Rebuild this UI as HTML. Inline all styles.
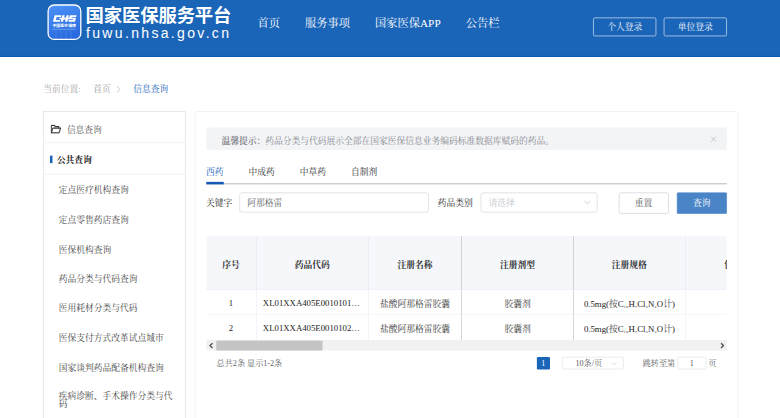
<!DOCTYPE html>
<html lang="zh-CN">
<head>
<meta charset="utf-8">
<title>国家医保服务平台</title>
<style>
*{box-sizing:border-box;margin:0;padding:0}
html,body{width:780px;height:418px;overflow:hidden;background:#fff}
body{font-family:"Liberation Serif","Noto Serif CJK SC",serif;position:relative}
#wrap{position:absolute;left:0;top:0;width:1248px;height:670px;transform:scale(.625);transform-origin:0 0;font-size:14px;color:#606266;background:#fff;overflow:hidden}
#hd{position:absolute;left:0;top:0;width:1248px;height:91.3px;background:#1b65b9;box-shadow:inset 0 -2px 0 #1259b6}
#nav{position:absolute;left:392px;top:0;height:75px;line-height:75px;font-size:18px;color:#fff;white-space:nowrap}
#nav>span{display:inline-block;padding:0 20px}
.lg{position:absolute;top:28px;height:30.4px;width:101.5px;border:1px solid rgba(255,255,255,.9);border-radius:3px;color:#fff;font-size:14px;line-height:30.8px;text-align:center}
#logo{position:absolute;left:0;top:0}
#bc{position:absolute;left:69.3px;top:133.2px;line-height:20px;font-size:14px;white-space:nowrap;color:#aaa}
#bc .a{color:#999;margin-left:20px}
#bc .s{display:inline-block;width:7px;height:12px;margin:0 20px 0 9px;vertical-align:-1.5px}
#bc .c{color:#1b65b9}
#sb{position:absolute;left:69px;top:178.46px;width:228px;height:520px;border:1px solid #dcdcdc;background:#fff}
#sb .t{height:49.74px;border-bottom:1px solid #ebebeb;line-height:57.6px;padding-left:37px;color:#555;position:relative;margin-top:0}
#sb .t .ic{position:absolute;left:10.5px;top:19.3px}
#sb .g{height:50.3px;border-bottom:1px solid #ebebeb;line-height:56.5px;padding-left:21px;color:#222;font-weight:bold;position:relative}
#sb .g:before{content:"";position:absolute;left:10px;top:20px;width:4.4px;height:11.6px;background:#1b65b9}
#sb ul{list-style:none;padding-top:.7px}
#sb li{height:47.3px;line-height:50.6px;padding-left:24px;color:#484848;white-space:nowrap}
#sb li.w{line-height:12.4px;padding-top:17.6px;height:auto}
#mn{position:absolute;left:312px;top:178.46px;width:868.8px;height:520px;border:1px solid #ececec;border-radius:3px;background:#fff}
#mn>*{margin-top:.24px}
#al{position:absolute;left:16.6px;top:24.1px;width:833.6px;height:36px;border-radius:4px;background:#f3f4f6;line-height:44.4px;padding-left:25px;overflow:hidden;color:#878a91;white-space:nowrap;font-size:14px}
#al b{color:#74777d;font-weight:600}
#al .ic{position:absolute;right:16.5px;top:14px}
#tabs{position:absolute;left:16.6px;top:74.9px;width:833.6px;height:40px;line-height:42.4px;color:#303133;white-space:nowrap}
#tabs:after{content:"";position:absolute;left:0;bottom:0;width:100%;height:1.3px;background:#c8c8c8}
#tabs>span{display:inline-block;padding:0 20px}
#tabs>span:first-child{padding-left:0;color:#1b65b9}
#tabs i{position:absolute;left:0;bottom:0;width:28px;height:3.3px;background:#1458b5;z-index:2}
.lb{position:absolute;top:128.5px;height:32px;line-height:33.6px;color:#2c2c2c;white-space:nowrap}
.in{position:absolute;top:128.5px;height:32px;border:1px solid #d2d4d8;border-radius:4px;line-height:31.6px;padding-left:11.5px;color:#606266;background:#fff;white-space:nowrap}
.bt{position:absolute;top:128.4px;height:33.6px;width:80px;border:1px solid #c9cbd0;border-radius:4px;line-height:31.6px;text-align:center;color:#606266;background:#fff}
.bt.p{background:#4984c7;border-color:#4984c7;color:#fff;border-radius:1.5px}
#tb{position:absolute;left:16.6px;top:197.6px;width:833.6px;height:183.7px;overflow:hidden}
#tb table{border-collapse:collapse;table-layout:fixed;width:3934px}
#tb th{height:86.7px;background:#f5f7fa;color:#303133;font-weight:bold;text-align:center;border-right:1px solid #e6e9f0;border-bottom:1px solid #ebeef5;padding:5.4px 10px 0}
#tb td{height:40px;text-align:center;border-right:1px solid #ebeef5;border-bottom:1px solid #eff1f6;padding:2.4px 10px 0;white-space:nowrap;overflow:hidden;text-overflow:ellipsis;color:#222}
#tb td .k{color:#3c3c3c}
#tb s{text-decoration:none;font-size:11.3px}
#tb tr:last-child td{border-bottom:none}
#tb .dk{border-right:1.3px solid #bdbdbd}
#sc{position:absolute;left:0;top:166.7px;width:833.6px;height:17px;background:#f1f1f1}
#sc b{position:absolute;left:16.8px;top:.7px;width:169.2px;height:15.9px;background:#c4c4c4}
#sc .ic{position:absolute;top:3.8px}
#pg{position:absolute;left:0;top:391.8px;width:866px;height:20px;font-size:13px;line-height:20px;color:#606266;white-space:nowrap}
#pg>*{position:absolute;top:0}
#pg .n{left:546.2px;width:20.5px;height:19.6px;background:#1b65b9;color:#fff;text-align:center;border-radius:2px;line-height:19.6px}
#pg .z{left:585.7px;width:99.5px;height:19.6px;border:1px solid #dcdfe6;border-radius:3px;line-height:17.6px;padding-left:21px}
#pg .j{left:770.8px;width:46.5px;height:19.6px;border:1px solid #dcdfe6;border-radius:3px;line-height:17.6px;text-align:center}
</style>
</head>
<body>
<div id="wrap">
 <div id="hd">
  <div id="nav"><span>首页</span><span>服务事项</span><span>国家医保APP</span><span>公告栏</span></div>
  <div class="lg" style="left:948.8px">个人登录</div>
  <div class="lg" style="left:1062.4px;width:100.4px">单位登录</div>
 </div>
 <div id="bc">当前位置:<span class="a">首页</span><svg class="s" viewBox="0 0 7 12" fill="none" stroke="#a9acb3" stroke-width="1.1"><path d="M1 .8l5 5.2-5 5.2"/></svg><span class="c">信息查询</span></div>
 <div id="sb">
  <div class="t"><svg class="ic" width="17" height="15" viewBox="0 0 17 15" fill="none" stroke="#3a3a3a" stroke-width="1.8" stroke-linejoin="round"><path d="M1 13.5V1.5h5l1.5 2H13v2.5"/><path d="M1 13.5l2.6-7.5H16l-2.6 7.5z"/></svg>信息查询</div>
  <div class="g">公共查询</div>
  <ul>
   <li>定点医疗机构查询</li>
   <li>定点零售药店查询</li>
   <li>医保机构查询</li>
   <li>药品分类与代码查询</li>
   <li>医用耗材分类与代码</li>
   <li>医保支付方式改革试点城市</li>
   <li>国家谈判药品配备机构查询</li>
   <li class="w">疾病诊断、手术操作分类与代<br>码</li>
  </ul>
 </div>
 <div id="mn">
  <div id="al"><b>温馨提示：</b>药品分类与代码展示全部在国家医保信息业务编码标准数据库赋码的药品。<svg class="ic" width="9.6" height="9.6" viewBox="0 0 9 9" stroke="#b3b7be" stroke-width="1.1"><path d="M.8.8l7.4 7.4M8.2.8L.8 8.2"/></svg></div>
  <div id="tabs"><span>西药</span><span>中成药</span><span>中草药</span><span>自制剂</span><i></i></div>
  <div class="lb" style="left:16.6px">关键字</div>
  <div class="in" style="left:70px;width:303.3px">阿那格雷</div>
  <div class="lb" style="left:387.3px">药品类别</div>
  <div class="in" style="left:456px;width:186.8px;color:#c0c4cc">请选择<svg style="position:absolute;right:9px;top:11px" width="12" height="8" viewBox="0 0 12 8" fill="none" stroke="#c0c4cc" stroke-width="1.2"><path d="M1 1.2l5 5 5-5"/></svg></div>
  <div class="bt" style="left:676.6px">重置</div>
  <div class="bt p" style="left:769.8px">查询</div>
  <div id="tb">
   <table>
    <colgroup><col style="width:80.5px"><col style="width:179.3px"><col style="width:149.3px"><col style="width:178.7px"><col style="width:179.2px"><col style="width:180px"><col></colgroup>
    <tr><th>序号</th><th>药品代码</th><th class="dk">注册名称</th><th class="dk">注册剂型</th><th>注册规格</th><th>包装材质</th><th></th></tr>
    <tr><td>1</td><td>XL01XXA405E001010101463</td><td class="dk"><span class="k">盐酸阿那格雷胶囊</span></td><td class="dk"><span class="k">胶囊剂</span></td><td>0.5mg(<span class="k">按</span>C<s>₁₀</s>H<s>₇</s>Cl<s>₂</s>N<s>₃</s>O<span class="k">计</span>)</td><td></td><td></td></tr>
    <tr><td>2</td><td>XL01XXA405E001010201463</td><td class="dk"><span class="k">盐酸阿那格雷胶囊</span></td><td class="dk"><span class="k">胶囊剂</span></td><td>0.5mg(<span class="k">按</span>C<s>₁₀</s>H<s>₇</s>Cl<s>₂</s>N<s>₃</s>O<span class="k">计</span>)</td><td></td><td></td></tr>
   </table>
   <div id="sc"><b></b><svg class="ic" style="left:4px" width="7.6" height="9.8" viewBox="0 0 7 9" fill="none" stroke="#484848" stroke-width="1.8"><path d="M5.5 1L1.8 4.5 5.5 8"/></svg><svg class="ic" style="right:4px" width="7.6" height="9.8" viewBox="0 0 7 9" fill="none" stroke="#484848" stroke-width="1.8"><path d="M1.5 1l3.7 3.5L1.5 8"/></svg></div>
  </div>
  <div id="pg"><span style="left:33.5px">总共2条 显示1-2条</span><span class="n">1</span><span class="z">10条/页<svg style="position:absolute;right:9px;top:6.5px" width="10" height="6" viewBox="0 0 10 6" fill="none" stroke="#c0c4cc" stroke-width="1.1"><path d="M1 .8l4 4 4-4"/></svg></span><span style="left:715.3px">跳转至第</span><span class="j">1</span><span style="left:820.4px">页</span></div>
 </div>
</div>
<svg id="logo" width="260" height="57" viewBox="0 0 260 57">
 <defs><linearGradient id="lgr" x1="0" y1="0" x2=".3" y2="1"><stop offset="0" stop-color="#4c93f7"/><stop offset="1" stop-color="#2a6bdf"/></linearGradient></defs>
 <rect x="46.9" y="4" width="35" height="36.8" rx="7.2" fill="#17509c" opacity=".4"/>
 <rect x="48.1" y="5" width="32.7" height="34.4" rx="6" fill="url(#lgr)" stroke="#fff" stroke-width="1.3"/>
 <g transform="translate(54.6,15.2) skewX(-14)" fill="#fff">
  <path d="M0 0H6.7V1.8H2.5V4.8H6.7V6.6H0z"/>
  <path d="M7.7 0H10.1V2.5H12V0H14.4V6.6H12V4.1H10.1V6.6H7.7z"/>
  <path d="M15.4 0H22V1.8H17.8V2.45H22V6.6H15.4V4.8H19.6V4.15H15.4z"/>
  <path d="M5.6 2.6H16.4V4H5.6z"/>
 </g>
 <text x="52.4" y="27.3" font-size="3.9" font-weight="bold" fill="#fff" textLength="23.6" lengthAdjust="spacing" style="font-family:'Liberation Sans','Noto Sans CJK SC',sans-serif">中国医疗保障</text>
 <rect x="52.4" y="28.9" width="23.4" height=".6" fill="#fff" opacity=".45"/>
 <path d="M56 31v8M61 31v8M66 31v8M71 31v8" stroke="#fff" stroke-width=".6" opacity=".18"/>
 <text x="85.5" y="22" font-size="18.4" font-weight="bold" fill="#fff" textLength="146" lengthAdjust="spacing" style="font-family:'Liberation Sans','Noto Sans CJK SC',sans-serif">国家医保服务平台</text>
 <text x="86" y="38.4" font-size="14" fill="#fff" textLength="143" lengthAdjust="spacing" style="font-family:'Liberation Sans','Noto Sans CJK SC',sans-serif">fuwu.nhsa.gov.cn</text>
</svg>
</body>
</html>
